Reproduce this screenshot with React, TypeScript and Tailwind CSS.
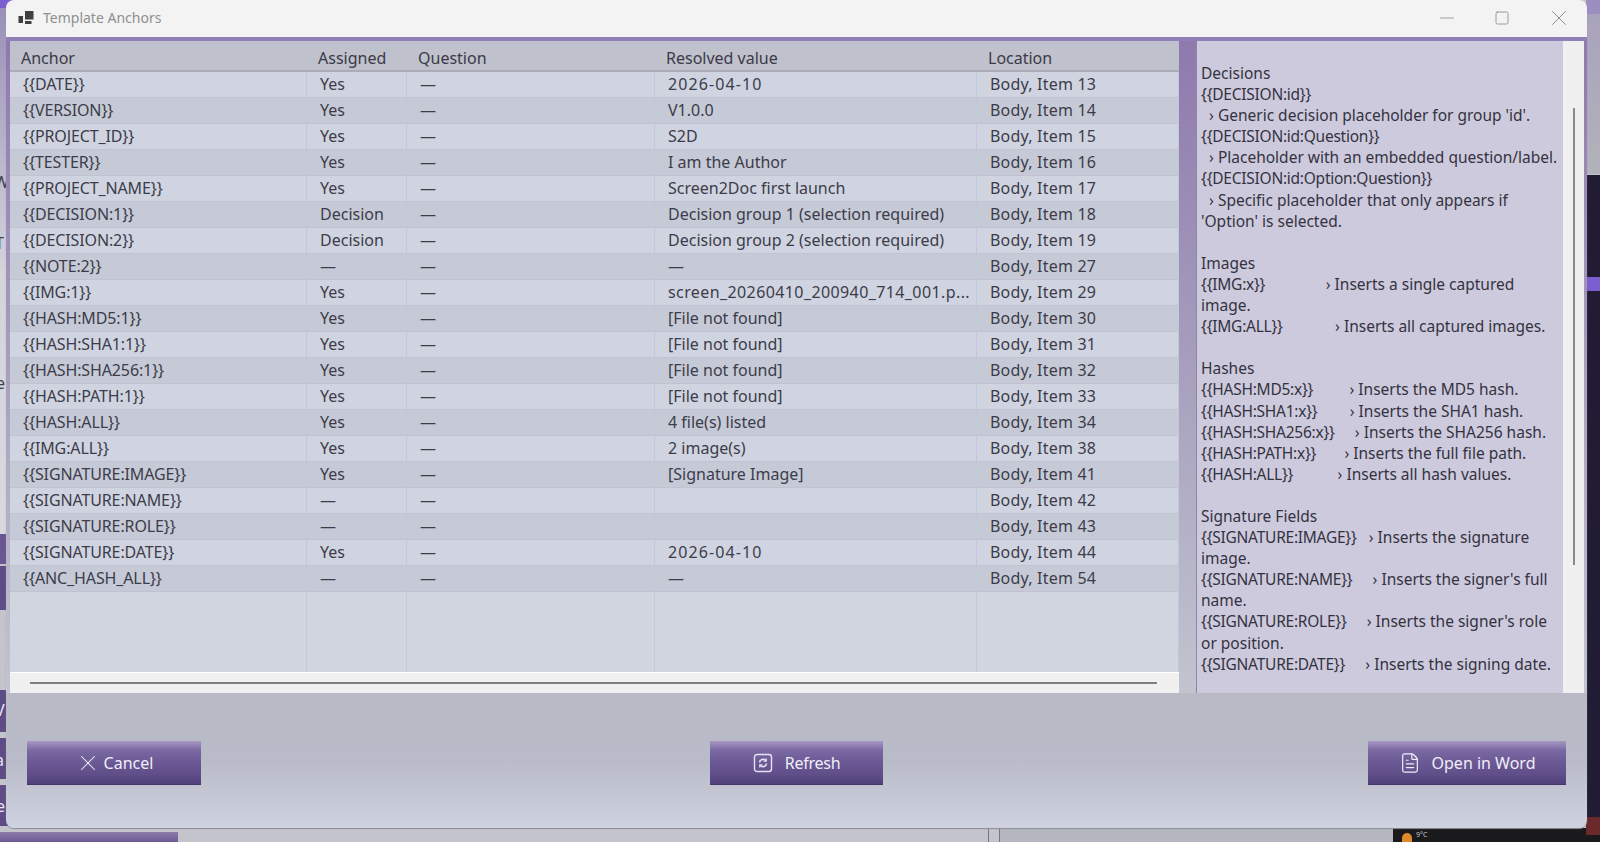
import { FileText, Minus, Square, X } from "lucide-react";

const rows = [
  ["{{DATE}}", "Yes", "—", "2026-04-10", "Body, Item 13"],
  ["{{VERSION}}", "Yes", "—", "V1.0.0", "Body, Item 14"],
  ["{{PROJECT_ID}}", "Yes", "—", "S2D", "Body, Item 15"],
  ["{{TESTER}}", "Yes", "—", "I am the Author", "Body, Item 16"],
  ["{{PROJECT_NAME}}", "Yes", "—", "Screen2Doc first launch", "Body, Item 17"],
  ["{{DECISION:1}}", "Decision", "—", "Decision group 1 (selection required)", "Body, Item 18"],
  ["{{DECISION:2}}", "Decision", "—", "Decision group 2 (selection required)", "Body, Item 19"],
  ["{{NOTE:2}}", "—", "—", "—", "Body, Item 27"],
  ["{{IMG:1}}", "Yes", "—", "screen_20260410_200940_714_001.p...", "Body, Item 29"],
  ["{{HASH:MD5:1}}", "Yes", "—", "[File not found]", "Body, Item 30"],
  ["{{HASH:SHA1:1}}", "Yes", "—", "[File not found]", "Body, Item 31"],
  ["{{HASH:SHA256:1}}", "Yes", "—", "[File not found]", "Body, Item 32"],
  ["{{HASH:PATH:1}}", "Yes", "—", "[File not found]", "Body, Item 33"],
  ["{{HASH:ALL}}", "Yes", "—", "4 file(s) listed", "Body, Item 34"],
  ["{{IMG:ALL}}", "Yes", "—", "2 image(s)", "Body, Item 38"],
  ["{{SIGNATURE:IMAGE}}", "Yes", "—", "[Signature Image]", "Body, Item 41"],
  ["{{SIGNATURE:NAME}}", "—", "—", "", "Body, Item 42"],
  ["{{SIGNATURE:ROLE}}", "—", "—", "", "Body, Item 43"],
  ["{{SIGNATURE:DATE}}", "Yes", "—", "2026-04-10", "Body, Item 44"],
  ["{{ANC_HASH_ALL}}", "—", "—", "—", "Body, Item 54"],
];

const headers = ["Anchor", "Assigned", "Question", "Resolved value", "Location"];

const legend = [
  "Decisions",
  "{{DECISION:id}}",
  "  › Generic decision placeholder for group 'id'.",
  "{{DECISION:id:Question}}",
  "  › Placeholder with an embedded question/label.",
  "{{DECISION:id:Option:Question}}",
  "  › Specific placeholder that only appears if",
  "'Option' is selected.",
  "",
  "Images",
  "{{IMG:x}}               › Inserts a single captured",
  "image.",
  "{{IMG:ALL}}             › Inserts all captured images.",
  "",
  "Hashes",
  "{{HASH:MD5:x}}         › Inserts the MD5 hash.",
  "{{HASH:SHA1:x}}        › Inserts the SHA1 hash.",
  "{{HASH:SHA256:x}}     › Inserts the SHA256 hash.",
  "{{HASH:PATH:x}}       › Inserts the full file path.",
  "{{HASH:ALL}}           › Inserts all hash values.",
  "",
  "Signature Fields",
  "{{SIGNATURE:IMAGE}}   › Inserts the signature",
  "image.",
  "{{SIGNATURE:NAME}}     › Inserts the signer's full",
  "name.",
  "{{SIGNATURE:ROLE}}     › Inserts the signer's role",
  "or position.",
  "{{SIGNATURE:DATE}}     › Inserts the signing date.",
];

const gridCols = "grid grid-cols-[297px_100px_248px_322px_1fr]";

function cellTracking(cell: string) {
  if (/^\d{4}-/.test(cell)) return "tracking-[1.1px]";
  if (cell.startsWith("screen_")) return "tracking-[0.4px]";
  if (cell.startsWith("Body")) return "tracking-[0.2px]";
  if (cell.startsWith("{{")) return "tracking-[-0.12px]";
  return "";
}

function LegendLine({ line }: { line: string }) {
  if (!line) return <div className="h-[21.1px]" />;
  const end = line.indexOf("}}");
  if (end < 0) return <div>{line}</div>;
  return (
    <div>
      <span className="tracking-[-0.25px]">{line.slice(0, end + 2)}</span>
      {line.slice(end + 2)}
    </div>
  );
}

function AppIcon() {
  return (
    <svg width="16" height="16" viewBox="0 0 16 16" fill="#3f3f3f">
      <rect x="7" y="1" width="8.5" height="8.5" />
      <rect x="0.5" y="6" width="4.5" height="7" />
      <rect x="7" y="11" width="6.5" height="3" />
    </svg>
  );
}

function RefreshIcon() {
  return (
    <svg width="20" height="20" viewBox="0 0 20 20" fill="none" stroke="#e8e2f4">
      <rect x="1.5" y="1.5" width="17" height="17" rx="2.5" strokeWidth="1.4" />
      <path d="M6.5 9.5a3.6 3.6 0 0 1 6.2-2M13.5 10.5a3.6 3.6 0 0 1-6.2 2" strokeWidth="1.7" />
      <path d="M13.2 5.5v2.6h-2.6M6.8 14.5v-2.6h2.6" strokeWidth="1.3" />
    </svg>
  );
}

function ActionButton({ icon, label, className }: { icon: React.ReactNode; label: string; className: string }) {
  return (
    <button
      className={`flex h-[44px] items-center justify-center border-b border-[#453868] bg-[linear-gradient(to_bottom,#a698c4_0%,#7a68a2_22%,#6b5995_50%,#5f4e88_78%,#50407a_100%)] text-[16px] text-[#f0eef8] ${className}`}
    >
      {icon}
      {label}
    </button>
  );
}

export default function App() {
  return (
    <div className="relative h-[842px] w-[1600px] overflow-hidden bg-[#c4c4cc] font-['Noto_Sans','Open_Sans',sans-serif]">
      {/* desktop peeking out behind the dialog */}
      <div className="absolute left-0 top-0 h-[8px] w-[14px] bg-[#7b5fd0]" />
      <div className="absolute left-0 top-[8px] h-[530px] w-[8px] bg-gradient-to-b from-[#9a90b8] via-[#d4d4dc] to-[#d8d8de]" />
      <div className="absolute left-0 top-[534px] h-[30px] w-[8px] bg-[#6a5690]" />
      <div className="absolute left-0 top-[566px] h-[44px] w-[8px] bg-[#5d4c85]" />
      <div className="absolute left-0 top-[690px] h-[42px] w-[8px] bg-[#5d4c85]" />
      <div className="absolute left-0 top-[738px] h-[41px] w-[8px] bg-[#5d4c85]" />
      <div className="absolute left-0 top-[785px] h-[41px] w-[8px] bg-[#5d4c85]" />
      <span className="absolute left-[-6px] top-[172px] text-[16px] leading-[20px] text-[#3c3c4a]">W</span>
      <span className="absolute left-[-5px] top-[233px] text-[16px] leading-[20px] text-[#3c3c4a]">T</span>
      <span className="absolute left-[-4px] top-[373px] text-[16px] leading-[20px] text-[#3c3c4a]">e</span>
      <span className="absolute left-[-5px] top-[700px] text-[16px] leading-[20px] text-[#e8e4f2]">V</span>
      <span className="absolute left-[-5px] top-[750px] text-[16px] leading-[20px] text-[#e8e4f2]">a</span>
      <span className="absolute left-[-4px] top-[796px] text-[16px] leading-[20px] text-[#e8e4f2]">e</span>
      <div className="absolute bottom-0 left-0 h-[10px] w-[178px] bg-gradient-to-b from-[#8b7cac] to-[#6b5a90]" />
      <div className="absolute bottom-0 left-[988px] h-[14px] w-[1px] bg-[#777777]" />
      <div className="absolute bottom-0 left-[999px] h-[14px] w-[394px] border-l border-[#777777] bg-[#b4b6c0]" />
      <div className="absolute bottom-0 right-0 h-[14px] w-[207px] bg-[#1a1a1c]" />
      <div className="absolute bottom-0 left-[1402px] h-[9px] w-[10px] rounded-t-full bg-[#e08a2c]" />
      <span className="absolute left-[1416px] top-[831px] text-[7px] leading-[8px] text-[#c8c8c8]">9°C</span>
      <div className="absolute right-0 top-0 h-[14px] w-[14px] bg-[#9c8fc0]" />
      <div className="absolute right-0 top-[14px] h-[160px] w-[14px] bg-gradient-to-b from-[#a9a3bd] to-[#b2b2ba]" />
      <div className="absolute right-0 top-[175px] h-[655px] w-[14px] bg-[#211c33]" />
      <div className="absolute right-0 top-[277px] h-[14px] w-[14px] bg-[#7b5fd0]" />
      <div className="absolute right-0 top-[817px] h-[18px] w-[14px] bg-[#6a2a2c]" />

      {/* dialog */}
      <div className="absolute left-[6px] top-0 flex h-[828px] w-[1581px] flex-col overflow-hidden rounded-[8px] shadow-[0_1px_1px_#8c8c94]">
        <div className="flex h-[37px] shrink-0 items-center bg-[#f3f3f3] pb-[2px]">
          <div className="ml-[12px] flex">
            <AppIcon />
          </div>
          <span className="ml-[9px] text-[14px] text-[#8f8f8f]">Template Anchors</span>
          <div className="ml-auto mr-[15px] flex items-center gap-[36px] text-[#868686]">
            <Minus size={22} strokeWidth={0.85} />
            <Square size={16} strokeWidth={1.2} />
            <X size={26} strokeWidth={0.85} />
          </div>
        </div>

        <div className="flex h-[656px] shrink-0 gap-[17px] border-t-[4px] border-[#9180b6] bg-gradient-to-b from-[#8f79ae] via-[#a79fbd] to-[#c2c4d0] pl-[4px] pr-[3px]">
          <div className="flex w-[1169px] flex-col text-[16px] text-[#3c3c4a]">
            <div className={`${gridCols} h-[31px] shrink-0 items-center border-b-2 border-[#aaacba] bg-[#bfc1cc] pt-[4px] text-[#3a3a48]`}>
              {headers.map((h) => (
                <span key={h} className="pl-[11px]">
                  {h}
                </span>
              ))}
            </div>
            {rows.map((row, i) => (
              <div
                key={row[0]}
                className={`${gridCols} h-[26px] shrink-0 border-b border-[#c1c4d0] ${i % 2 === 0 ? "bg-[#d0d4e0]" : "bg-[#c6cad6]"}`}
              >
                {row.map((cell, j) => (
                  <span
                    key={j}
                    className={`flex items-center truncate border-r border-[#bccada] pb-[1px] pl-[13px] ${cellTracking(cell)}`}
                  >
                    {cell}
                  </span>
                ))}
              </div>
            ))}
            <div className={`${gridCols} min-h-0 flex-1 bg-[#d1d5e0]`}>
              {headers.map((h) => (
                <span key={h} className="border-r border-[#bccada]" />
              ))}
            </div>
            <div className="flex h-[21px] shrink-0 items-center border-t border-white bg-[#f0f0f0] pl-[20px]">
              <div className="h-[2px] w-[1127px] bg-[#7f7f7f]" />
            </div>
          </div>

          <div className="flex w-[388px] shrink-0 border-l border-[#8b87a8]">
            <div className="h-full w-[367px] whitespace-pre-wrap bg-[#cecadd] pl-[4px] pr-[2px] pt-[22px] text-[15.5px] leading-[21.1px] text-[#33333f]">
              {legend.map((line, i) => (
                <LegendLine key={i} line={line} />
              ))}
            </div>
            <div className="flex w-[21px] justify-center bg-[#f0f0f0] pt-[67px]">
              <div className="h-[457px] w-[2px] bg-[#8a8a8a]" />
            </div>
          </div>
        </div>

        <div className="grid flex-1 grid-cols-3 items-start bg-gradient-to-b from-[#b9bac6] via-[#b9bbc8] to-[#cfd2e0] px-[21px] pt-[48px]">
          <ActionButton icon={<X size={26} strokeWidth={0.95} />} label="Cancel" className="w-[174px] gap-[3px] justify-self-start" />
          <ActionButton icon={<RefreshIcon />} label="Refresh" className="w-[173px] gap-[12px] justify-self-center tracking-[-0.25px]" />
          <ActionButton icon={<FileText size={22} strokeWidth={1.3} />} label="Open in Word" className="w-[198px] gap-[11px] justify-self-end" />
        </div>
      </div>
    </div>
  );
}
